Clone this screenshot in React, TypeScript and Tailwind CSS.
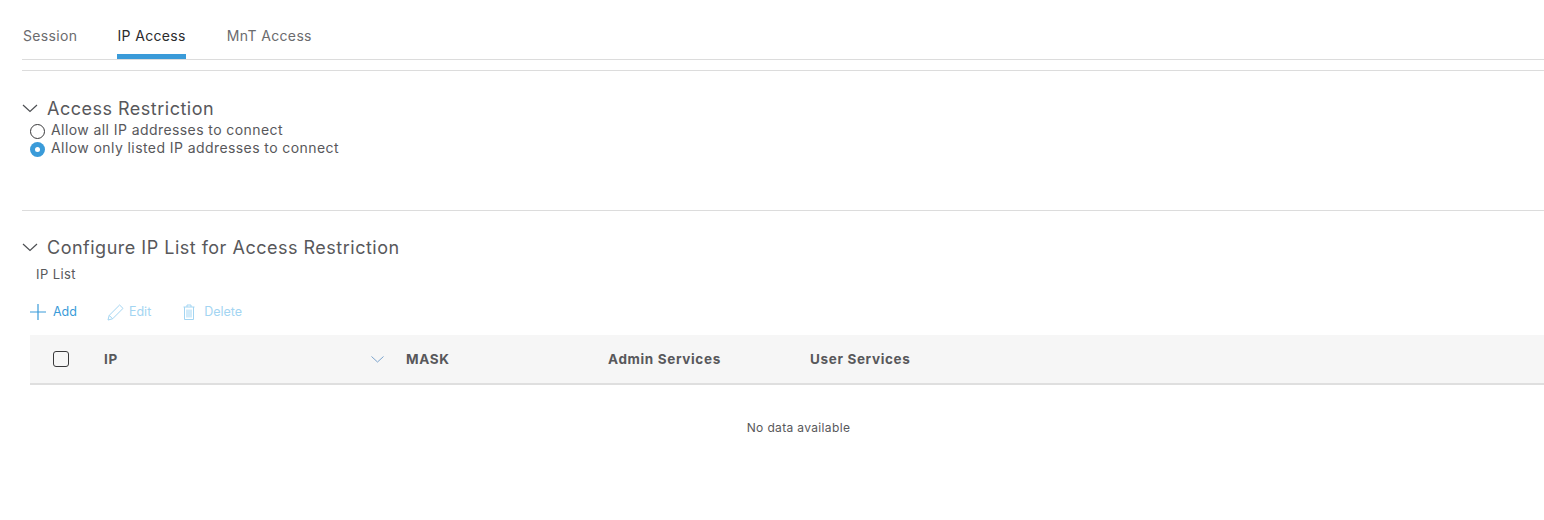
function Chevron({ className }: { className?: string }) {
  return (
    <svg width="16" height="9" viewBox="0 0 16 9" fill="none" stroke="currentColor" strokeWidth="1.2" className={className}>
      <path d="M1 1l7 6.5L15 1" />
    </svg>
  );
}

function SectionTitle({ children }: { children: string }) {
  return (
    <div className="flex items-center h-6">
      <Chevron className="mr-[9px] text-[#4d4f53]" />
      <h2 className="text-[18px] tracking-[0.5px] text-[#58585b]">{children}</h2>
    </div>
  );
}

export default function App() {
  return (
    <div className="h-[520px] w-[1544px] overflow-hidden bg-white pl-[22px] font-['Inter',sans-serif]">
      {/* Tabs */}
      <div className="flex h-[60px] items-end border-b border-[#dcdcdc] pl-px text-[14px] leading-5 tracking-[0.35px]">
        <div className="h-[59px] pt-[26px] text-[#6b6b6e]">Session</div>
        <div className="ml-[40px] h-[59px] border-b-[5px] border-[#3a9bd9] pt-[26px] text-[#2b2b2d]">IP Access</div>
        <div className="ml-[41px] h-[59px] pt-[26px] text-[#6b6b6e]">MnT Access</div>
      </div>
      <div className="mt-[10px] border-t border-[#dcdcdc]" />

      {/* Access restriction */}
      <section className="h-[139px] pt-[25px]">
        <SectionTitle>Access Restriction</SectionTitle>
        <div className="mt-[2px] flex h-[18px] items-center pl-2 text-[14px] tracking-[0.42px] text-[#58585b]">
          <span className="mr-[6px] h-[15px] w-[15px] rounded-full border border-[#39393b]" />
          <span className="mb-[4px]">Allow all IP addresses to connect</span>
        </div>
        <div className="flex h-[18px] items-center pl-2 text-[14px] tracking-[0.42px] text-[#58585b]">
          <span className="mr-[6px] flex h-[15px] w-[15px] items-center justify-center rounded-full bg-[#3a9bd9]">
            <span className="h-[5px] w-[5px] rounded-full bg-white" />
          </span>
          <span className="mb-[4px]">Allow only listed IP addresses to connect</span>
        </div>
      </section>

      {/* IP list */}
      <section className="border-t border-[#dcdcdc] pt-[24px]">
        <SectionTitle>Configure IP List for Access Restriction</SectionTitle>
        <div className="mt-[7px] pl-[14px] text-[13px] leading-4 tracking-[0.4px] text-[#58585b]">IP List</div>
        <div className="mt-[21px] flex h-[18px] items-center pl-2 text-[12.5px]">
          <span className="flex items-center text-[#3a9bd9]">
            <svg width="16" height="16" viewBox="0 0 16 16" stroke="currentColor" strokeWidth="1.2" className="mr-[7px]">
              <path d="M0 8h16M8 0v16" />
            </svg>
            Add
          </span>
          <span className="ml-[30px] flex items-center text-[#a3d5f2]">
            <svg width="17" height="17" viewBox="0 0 17 17" fill="none" stroke="currentColor" strokeWidth="1" className="mr-[5px]">
              <path d="M1 16l1.2-4.6L12.6 1l3.4 3.4L5.6 14.8 1 16zM2.2 11.4l3.4 3.4" />
            </svg>
            Edit
          </span>
          <span className="ml-[32px] flex items-center text-[#a3d5f2]">
            <svg width="12" height="17" viewBox="0 0 12 17" fill="none" stroke="currentColor" strokeWidth="1" className="mr-[9px]">
              <path d="M.5 3h11M4 3V1h4v2M1.5 3v12.5h9V3M4 5.5v8M6 5.5v8M8 5.5v8" />
            </svg>
            Delete
          </span>
        </div>

        <div className="ml-2 mt-[14px]">
          <div className="flex h-[50px] items-center border-b-2 border-[#dfdfdf] bg-[#f6f6f6] text-[13.5px] font-bold tracking-[0.65px] text-[#58585b]">
            <span className="ml-[23px] h-4 w-4 rounded-[3px] border border-[#39393b]" />
            <span className="ml-[35px] w-[267px]">IP</span>
            <svg width="13" height="7" viewBox="0 0 13 7" fill="none" stroke="#7ba3cc" strokeWidth="1">
              <path d="M.5.5l6 5.5 6-5.5" />
            </svg>
            <span className="ml-[22px] w-[202px]">MASK</span>
            <span className="w-[202px]">Admin Services</span>
            <span>User Services</span>
          </div>
          <div className="mt-[35px] pl-[23px] text-center text-[12px] leading-4 tracking-[0.35px] text-[#58585b]">No data available</div>
        </div>
      </section>
    </div>
  );
}
